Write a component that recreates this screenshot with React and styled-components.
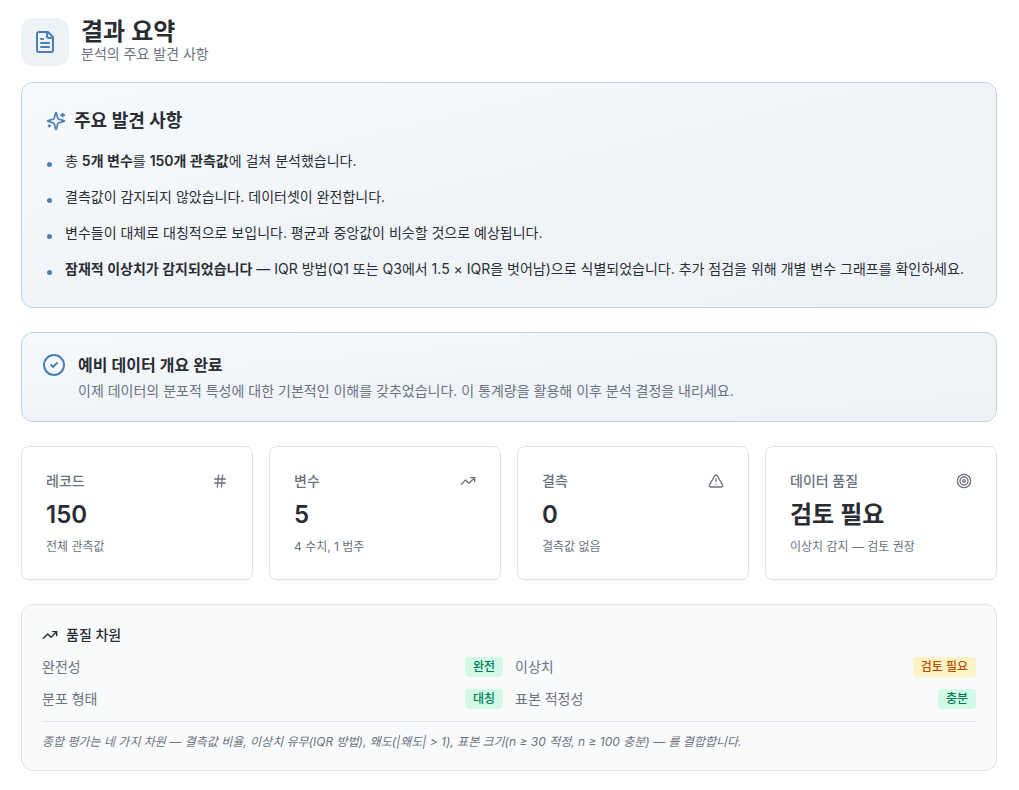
import React from 'react';
import styled, { createGlobalStyle, css } from 'styled-components';
import { CircleCheck, Hash, Target, TrendingUp, TriangleAlert } from 'lucide-react';

const colors = {
  text: '#2a2d34',
  muted: '#6b7280',
  primary: '#4a7fb5',
  border: '#e1e3e8',
  primaryBorder: '#bfd1e4',
};

const GlobalStyle = createGlobalStyle`
  * {
    box-sizing: border-box;
    margin: 0;
    padding: 0;
  }

  body {
    background: #ffffff;
    color: ${colors.text};
    font-family: Inter, 'Noto Sans CJK KR', sans-serif;
    font-size: 14px;
    line-height: 20px;
  }

  svg {
    flex-shrink: 0;
  }
`;

const StrokeIcon = styled.svg.attrs({ viewBox: '0 0 24 24', 'aria-hidden': true })`
  width: ${({ $size }) => $size}px;
  height: ${({ $size }) => $size}px;
  fill: none;
  stroke: currentColor;
  stroke-width: 2;
  stroke-linecap: round;
  stroke-linejoin: round;
`;

const Page = styled.main`
  display: flex;
  flex-direction: column;
  gap: 24px;
  padding: 18px 22px 18px 21px;
`;

const Intro = styled.section`
  display: flex;
  flex-direction: column;
  gap: 16px;
`;

const Header = styled.header`
  display: flex;
  align-items: center;
  gap: 12px;
`;

Header.Icon = styled.div`
  display: flex;
  align-items: center;
  justify-content: center;
  width: 48px;
  height: 48px;
  border-radius: 12px;
  background: #edf2f7;
  color: ${colors.primary};
`;

Header.Title = styled.h1`
  font-size: 24px;
  font-weight: 600;
  line-height: 24px;
`;

Header.Subtitle = styled.p`
  color: ${colors.muted};
`;

const gradientPanel = css`
  border: 1px solid ${colors.primaryBorder};
  border-radius: 12px;
  background: linear-gradient(to bottom right, #f7fafc, #f0f4f9 50%, #edf2f6);
`;

const Findings = styled.section`
  ${gradientPanel}
  display: flex;
  flex-direction: column;
  gap: 16px;
  padding: 24px 24px 28px;
`;

Findings.Title = styled.h2`
  display: flex;
  align-items: center;
  gap: 8px;
  font-size: 18px;
  font-weight: 600;
  line-height: 28px;

  svg {
    color: ${colors.primary};
  }
`;

Findings.List = styled.ul`
  display: flex;
  flex-direction: column;
  gap: 16px;
  list-style: none;
`;

Findings.Item = styled.li`
  display: flex;
  gap: 12px;

  &::before {
    content: '';
    flex-shrink: 0;
    width: 5px;
    height: 5px;
    margin: 11px 1px 0;
    border-radius: 50%;
    background: ${colors.primary};
  }

  strong {
    font-weight: 600;
  }
`;

const Completion = styled.section`
  ${gradientPanel}
  display: flex;
  gap: 12px;
  padding: 20px;

  svg {
    color: ${colors.primary};
  }
`;

Completion.Title = styled.h3`
  font-size: 16px;
  font-weight: 600;
  line-height: 24px;
`;

Completion.Text = styled.p`
  margin-top: 4px;
  color: ${colors.muted};
`;

const Stats = styled.section`
  display: grid;
  grid-template-columns: repeat(4, 1fr);
  gap: 16px;
`;

const StatCard = styled.article`
  padding: 24px;
  border: 1px solid ${colors.border};
  border-radius: 8px;
  background: #ffffff;
  box-shadow: 0 1px 2px rgba(0, 0, 0, 0.05);
`;

StatCard.Head = styled.div`
  display: flex;
  align-items: center;
  justify-content: space-between;
  color: ${colors.muted};
`;

StatCard.Label = styled.h4`
  font-size: 14px;
  font-weight: 500;
`;

StatCard.Value = styled.p`
  margin-top: 8px;
  font-size: 24px;
  font-weight: 600;
  line-height: 32px;
`;

StatCard.Note = styled.p`
  margin-top: 8px;
  color: ${colors.muted};
  font-size: 12px;
  line-height: 16px;
`;

const Quality = styled.section`
  padding: 20px;
  border: 1px solid ${colors.border};
  border-radius: 12px;
  background: #f9fafc;
`;

Quality.Title = styled.h4`
  display: flex;
  align-items: center;
  gap: 8px;
  font-size: 14px;
  font-weight: 500;
`;

Quality.Grid = styled.dl`
  display: grid;
  grid-template-columns: 1fr 1fr;
  gap: 12px;
  margin-top: 12px;
`;

Quality.Row = styled.div`
  display: flex;
  align-items: center;
  justify-content: space-between;

  dt {
    color: ${colors.muted};
  }
`;

Quality.Note = styled.p`
  margin-top: 12px;
  padding-top: 12px;
  border-top: 1px solid ${colors.border};
  color: ${colors.muted};
  font-size: 12px;
  font-style: italic;
  line-height: 16px;
`;

const Badge = styled.dd`
  padding: 2px 8px;
  border-radius: 4px;
  font-size: 12px;
  font-weight: 500;
  line-height: 16px;
  background: ${({ $tone }) => ($tone === 'warning' ? '#fef3c6' : '#d0fae5')};
  color: ${({ $tone }) => ($tone === 'warning' ? '#bb4d00' : '#007a55')};
`;

function FileIcon() {
  return (
    <StrokeIcon $size={24}>
      <path d="M15 2H6a2 2 0 0 0-2 2v16a2 2 0 0 0 2 2h12a2 2 0 0 0 2-2V7Z" />
      <path d="M14 2v4a2 2 0 0 0 2 2h4" />
      <path d="M10 9H8" />
      <path d="M16 13H8" />
      <path d="M16 17H8" />
    </StrokeIcon>
  );
}

function SparklesIcon() {
  return (
    <StrokeIcon $size={20}>
      <path d="M9.937 15.5A2 2 0 0 0 8.5 14.063l-6.135-1.582a.5.5 0 0 1 0-.962L8.5 9.936A2 2 0 0 0 9.937 8.5l1.582-6.135a.5.5 0 0 1 .963 0L14.063 8.5A2 2 0 0 0 15.5 9.937l6.135 1.581a.5.5 0 0 1 0 .964L15.5 14.063a2 2 0 0 0-1.437 1.437l-1.582 6.135a.5.5 0 0 1-.963 0z" />
      <path d="M20 3v4" />
      <path d="M22 5h-4" />
      <path d="M4 17v2" />
      <path d="M5 18H3" />
    </StrokeIcon>
  );
}

const stats = [
  { label: '레코드', value: '150', note: '전체 관측값', Icon: Hash },
  { label: '변수', value: '5', note: '4 수치, 1 범주', Icon: TrendingUp },
  { label: '결측', value: '0', note: '결측값 없음', Icon: TriangleAlert },
  { label: '데이터 품질', value: '검토 필요', note: '이상치 감지 — 검토 권장', Icon: Target },
];

const dimensions = [
  { label: '완전성', status: '완전', tone: 'success' },
  { label: '이상치', status: '검토 필요', tone: 'warning' },
  { label: '분포 형태', status: '대칭', tone: 'success' },
  { label: '표본 적정성', status: '충분', tone: 'success' },
];

export default function App() {
  return (
    <>
      <GlobalStyle />
      <Page lang="ko">
        <Intro>
          <Header>
            <Header.Icon>
              <FileIcon />
            </Header.Icon>
            <div>
              <Header.Title>결과 요약</Header.Title>
              <Header.Subtitle>분석의 주요 발견 사항</Header.Subtitle>
            </div>
          </Header>
          <Findings>
            <Findings.Title>
              <SparklesIcon />
              주요 발견 사항
            </Findings.Title>
            <Findings.List>
              <Findings.Item>
                <p>
                  총 <strong>5개 변수</strong>를 <strong>150개 관측값</strong>에 걸쳐 분석했습니다.
                </p>
              </Findings.Item>
              <Findings.Item>
                <p>결측값이 감지되지 않았습니다. 데이터셋이 완전합니다.</p>
              </Findings.Item>
              <Findings.Item>
                <p>변수들이 대체로 대칭적으로 보입니다. 평균과 중앙값이 비슷할 것으로 예상됩니다.</p>
              </Findings.Item>
              <Findings.Item>
                <p>
                  <strong>잠재적 이상치가 감지되었습니다</strong> — IQR 방법(Q1 또는 Q3에서 1.5 ×
                  IQR을 벗어남)으로 식별되었습니다. 추가 점검을 위해 개별 변수 그래프를 확인하세요.
                </p>
              </Findings.Item>
            </Findings.List>
          </Findings>
        </Intro>

        <Completion>
          <CircleCheck size={24} />
          <div>
            <Completion.Title>예비 데이터 개요 완료</Completion.Title>
            <Completion.Text>
              이제 데이터의 분포적 특성에 대한 기본적인 이해를 갖추었습니다. 이 통계량을 활용해 이후
              분석 결정을 내리세요.
            </Completion.Text>
          </div>
        </Completion>

        <Stats>
          {stats.map(({ label, value, note, Icon }) => (
            <StatCard key={label}>
              <StatCard.Head>
                <StatCard.Label>{label}</StatCard.Label>
                <Icon size={16} />
              </StatCard.Head>
              <StatCard.Value>{value}</StatCard.Value>
              <StatCard.Note>{note}</StatCard.Note>
            </StatCard>
          ))}
        </Stats>

        <Quality>
          <Quality.Title>
            <TrendingUp size={16} />
            품질 차원
          </Quality.Title>
          <Quality.Grid>
            {dimensions.map(({ label, status, tone }) => (
              <Quality.Row key={label}>
                <dt>{label}</dt>
                <Badge $tone={tone}>{status}</Badge>
              </Quality.Row>
            ))}
          </Quality.Grid>
          <Quality.Note>
            종합 평가는 네 가지 차원 — 결측값 비율, 이상치 유무(IQR 방법), 왜도(|왜도| &gt; 1), 표본
            크기(n ≥ 30 적정, n ≥ 100 충분) — 를 결합합니다.
          </Quality.Note>
        </Quality>
      </Page>
    </>
  );
}
